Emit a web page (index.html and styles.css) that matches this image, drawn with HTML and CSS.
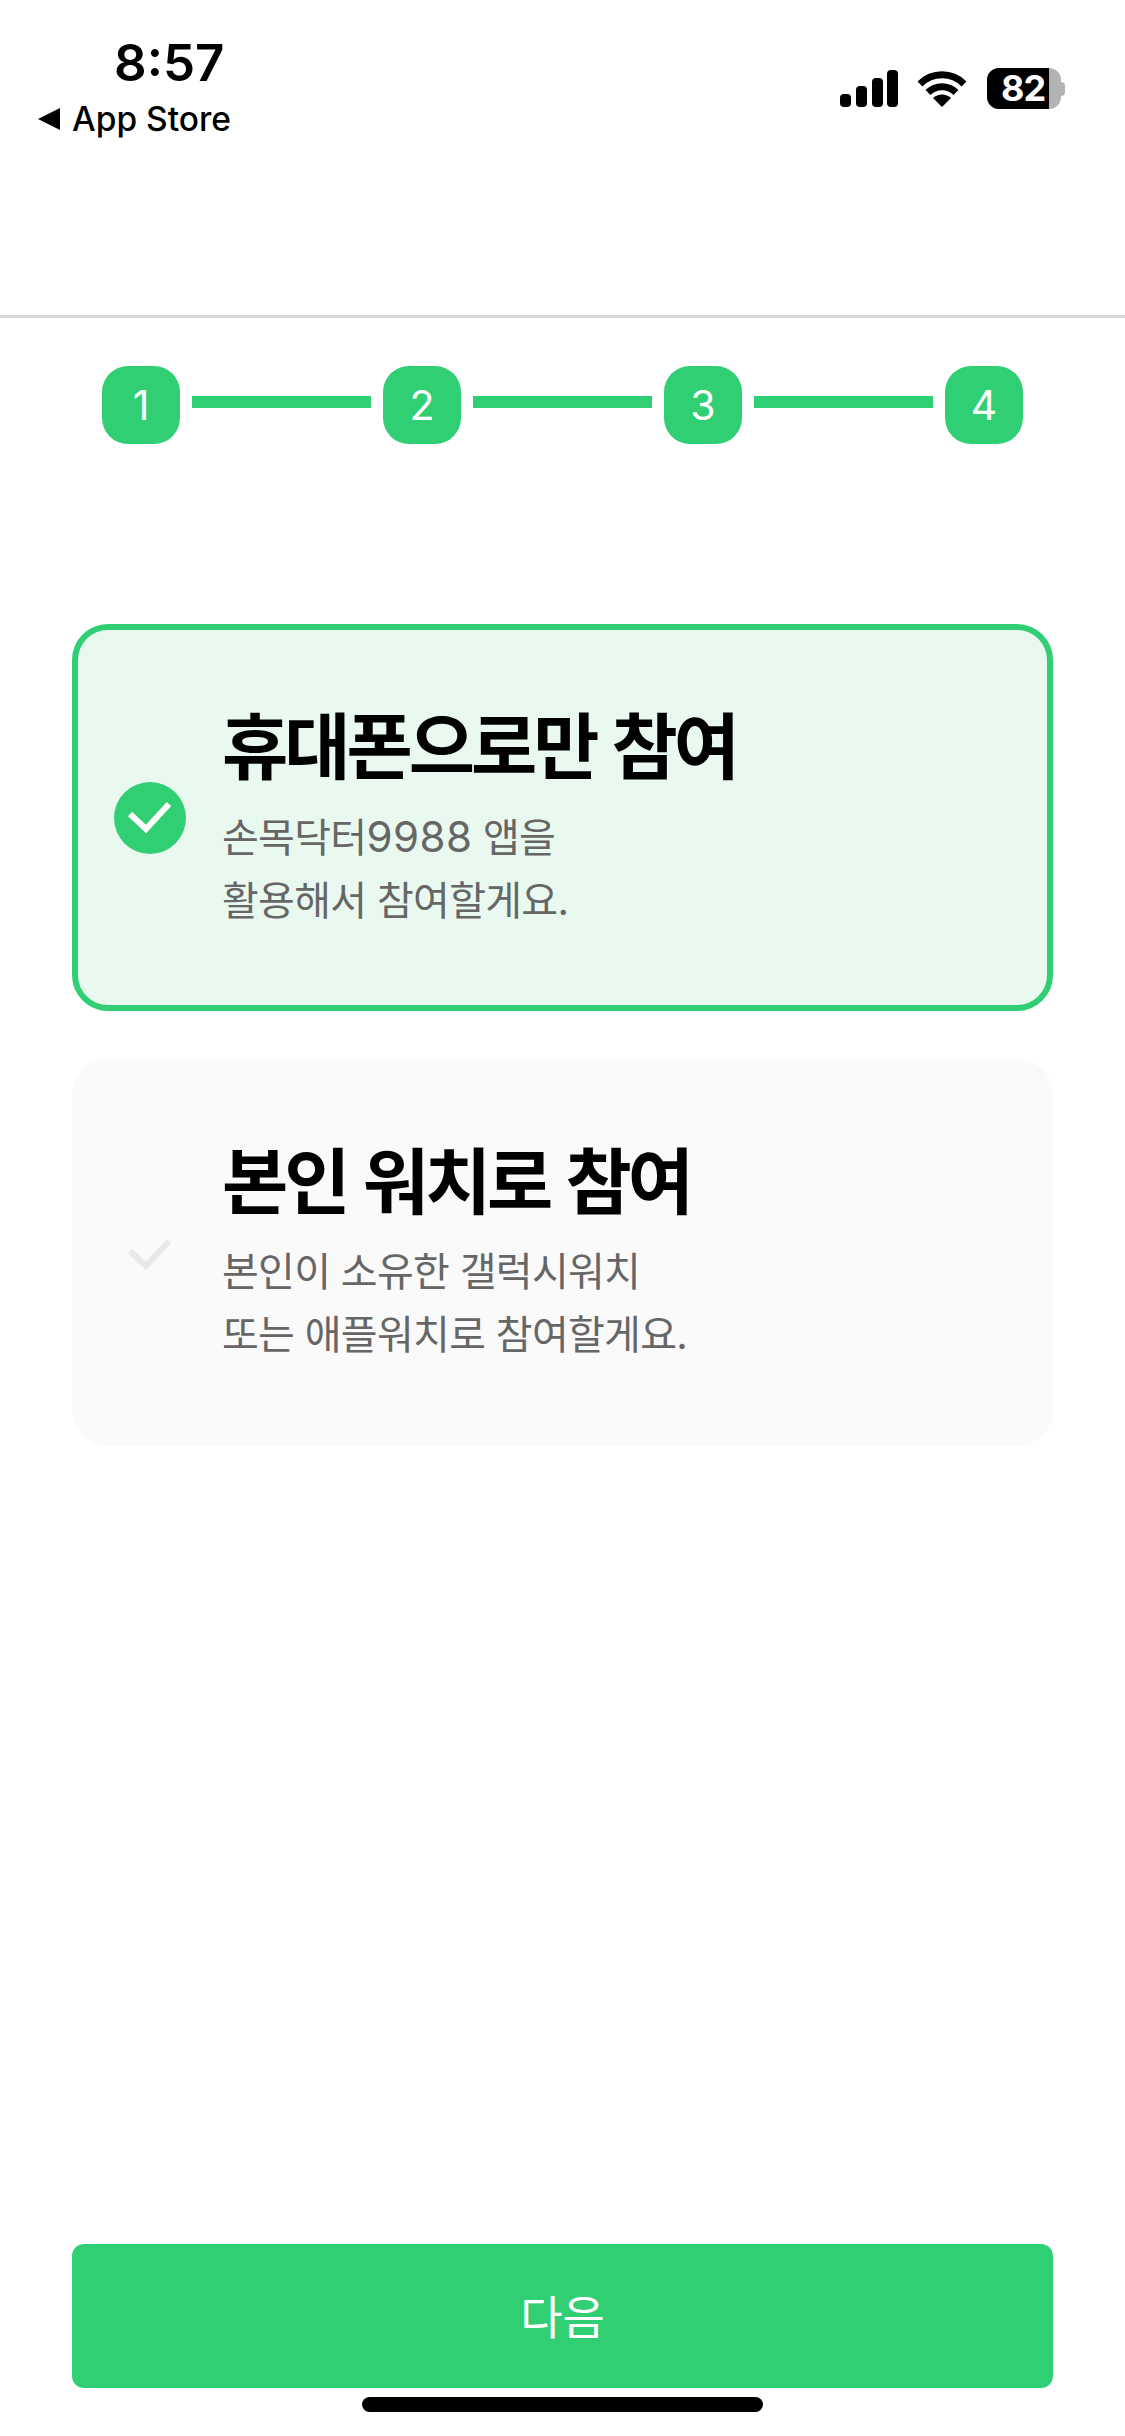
FILE: index.html
```html
<!DOCTYPE html>
<html lang="ko">
<head>
  <meta charset="UTF-8" />
  <meta name="viewport" content="width=device-width, initial-scale=1.0" />
  <title>참여 방법 선택</title>
  <link rel="stylesheet" href="styles.css">
</head>
<body>

  <div class="page">
    <header class="top-bar">
      <div class="status-left">
        <div class="time">8:57</div>
        <div class="back-app"><span class="back-arrow"></span>App Store</div>
      </div>
      <div class="status-right">
        <svg class="signal" viewBox="0 0 58 37">
          <rect x="0" y="24" width="11" height="13" rx="4" />
          <rect x="16" y="16" width="11" height="21" rx="4" />
          <rect x="32" y="8" width="11" height="29" rx="4" />
          <rect x="47" y="0" width="11" height="37" rx="4" />
        </svg>
        <svg class="wifi" viewBox="0 0 50 37">
          <path d="M3 14 A31 31 0 0 1 47 14" fill="none" stroke="#000" stroke-width="7" />
          <path d="M11 22.5 A20 20 0 0 1 39 22.5" fill="none" stroke="#000" stroke-width="7" />
          <path d="M16 28 A13 13 0 0 1 34 28 L25 37 Z" />
        </svg>
        <div class="battery">
          <div class="battery-body"><span class="battery-level">82</span></div>
          <span class="battery-nub"></span>
        </div>
      </div>
    </header>

    <div class="steps">
      <div class="step">1</div>
      <div class="step-line"></div>
      <div class="step">2</div>
      <div class="step-line"></div>
      <div class="step">3</div>
      <div class="step-line"></div>
      <div class="step">4</div>
    </div>

    <div class="options">
      <div class="option selected">
        <svg class="check" viewBox="0 0 72 72">
          <circle class="check-bg" cx="36" cy="36" r="36" />
          <path class="check-mark" d="M16 32 L32 47 L55 22" />
        </svg>
        <div class="option-text">
          <h2>휴대폰으로만 참여</h2>
          <p>손목닥터<span class="num">9988</span> 앱을<br>활용해서 참여할게요.</p>
        </div>
      </div>

      <div class="option">
        <svg class="check" viewBox="0 0 72 72">
          <path class="check-mark" d="M16 32 L32 47 L55 22" />
        </svg>
        <div class="option-text">
          <h2>본인 워치로 참여</h2>
          <p>본인이 소유한 갤럭시워치<br>또는 애플워치로 참여할게요.</p>
        </div>
      </div>
    </div>

    <div class="bottom">
      <button type="button" class="next-btn">다음</button>
      <div class="home-bar"></div>
    </div>
  </div>

</body>
</html>
```

FILE: styles.css
```css
* {
  box-sizing: border-box;
}
body {
  margin: 0;
  background-color: #fff;
  font-family: "Noto Sans CJK KR", "Noto Sans", sans-serif;
}
.page {
  width: 1125px;
  height: 2436px;
  display: flex;
  flex-direction: column;
  overflow: hidden;
}
.top-bar {
  height: 318px;
  border-bottom: 3px solid #d9d9d9;
  padding: 35px 60px 0 38px;
  display: flex;
  justify-content: space-between;
  align-items: flex-start;
  font-family: Inter, "Liberation Sans", sans-serif;
}
.status-left {
  display: flex;
  flex-direction: column;
}
.time {
  margin-left: 76px;
  font-size: 51px;
  line-height: 56px;
  font-weight: 600;
  color: #000;
}
.back-app {
  display: flex;
  align-items: center;
  margin-top: 8px;
  font-size: 33.5px;
  line-height: 40px;
  font-weight: 500;
  color: #000;
}
.back-arrow {
  width: 0;
  height: 0;
  margin-right: 12px;
  border-top: 11px solid transparent;
  border-bottom: 11px solid transparent;
  border-right: 22px solid #000;
}
.status-right {
  display: flex;
  align-items: center;
  height: 41px;
  margin-top: 33px;
}
.signal {
  width: 58px;
  height: 37px;
  margin-right: 19px;
}
.wifi {
  width: 50px;
  height: 37px;
  margin-right: 20px;
}
.battery {
  display: flex;
  align-items: center;
}
.battery-body {
  width: 74px;
  height: 41px;
  border-radius: 12px;
  background-color: #b3b3b3;
}
.battery-level {
  display: block;
  width: 62px;
  height: 41px;
  padding-left: 14px;
  border-radius: 12px 0 0 12px;
  background-color: #000;
  color: #fff;
  font-size: 36px;
  line-height: 41px;
  font-weight: 700;
  letter-spacing: -1px;
}
.battery-nub {
  width: 4px;
  height: 14px;
  border-radius: 0 4px 4px 0;
  background-color: #b3b3b3;
}
.steps {
  display: flex;
  align-items: center;
  padding: 48px 102px 0;
}
.step {
  width: 78px;
  height: 78px;
  border-radius: 26px;
  background-color: #31cf73;
  color: #fff;
  font-family: Inter, "Liberation Sans", sans-serif;
  font-size: 41px;
  line-height: 78px;
  text-align: center;
}
.step-line {
  flex: 1;
  height: 12px;
  margin: 0 12px 6px;
  background-color: #31cf73;
}
.options {
  display: flex;
  flex-direction: column;
  gap: 48px;
  margin: 180px 72px 0;
}
.option {
  height: 387px;
  display: flex;
  align-items: center;
  gap: 36px;
  padding-left: 42px;
  border-radius: 36px;
  background-color: #fafafa;
}
.option.selected {
  padding-left: 36px;
  border: 6px solid #31cf73;
  background-color: #e9f9f0;
}
.check {
  width: 72px;
  height: 72px;
  margin-top: 4px;
  flex-shrink: 0;
}
.selected .check {
  margin-top: 0;
}
.check-bg {
  fill: #31cf73;
}
.check-mark {
  fill: none;
  stroke: #e8e8e8;
  stroke-width: 6;
}
.selected .check-mark {
  stroke: #fff;
}
.option-text {
  padding-bottom: 8px;
}
.option-text h2 {
  margin: 0;
  font-size: 72px;
  line-height: 92px;
  font-weight: 700;
  letter-spacing: -4px;
  color: #000;
}
.option-text p {
  margin: 17px 0 0;
  font-family: Inter, "Noto Sans CJK KR", sans-serif;
  font-size: 40px;
  line-height: 63px;
  color: #666;
  letter-spacing: -0.7px;
}
.num {
  font-size: 42px;
  letter-spacing: 0.5px;
}
.bottom {
  margin-top: auto;
  padding: 0 72px 24px;
}
.next-btn {
  display: block;
  width: 100%;
  height: 144px;
  padding-bottom: 6px;
  border: none;
  border-radius: 12px;
  background-color: #31cf73;
  color: #fff;
  font-family: inherit;
  font-size: 46px;
}
.home-bar {
  width: 401px;
  height: 15px;
  margin: 9px auto 0;
  border-radius: 8px;
  background-color: #000;
}
```
